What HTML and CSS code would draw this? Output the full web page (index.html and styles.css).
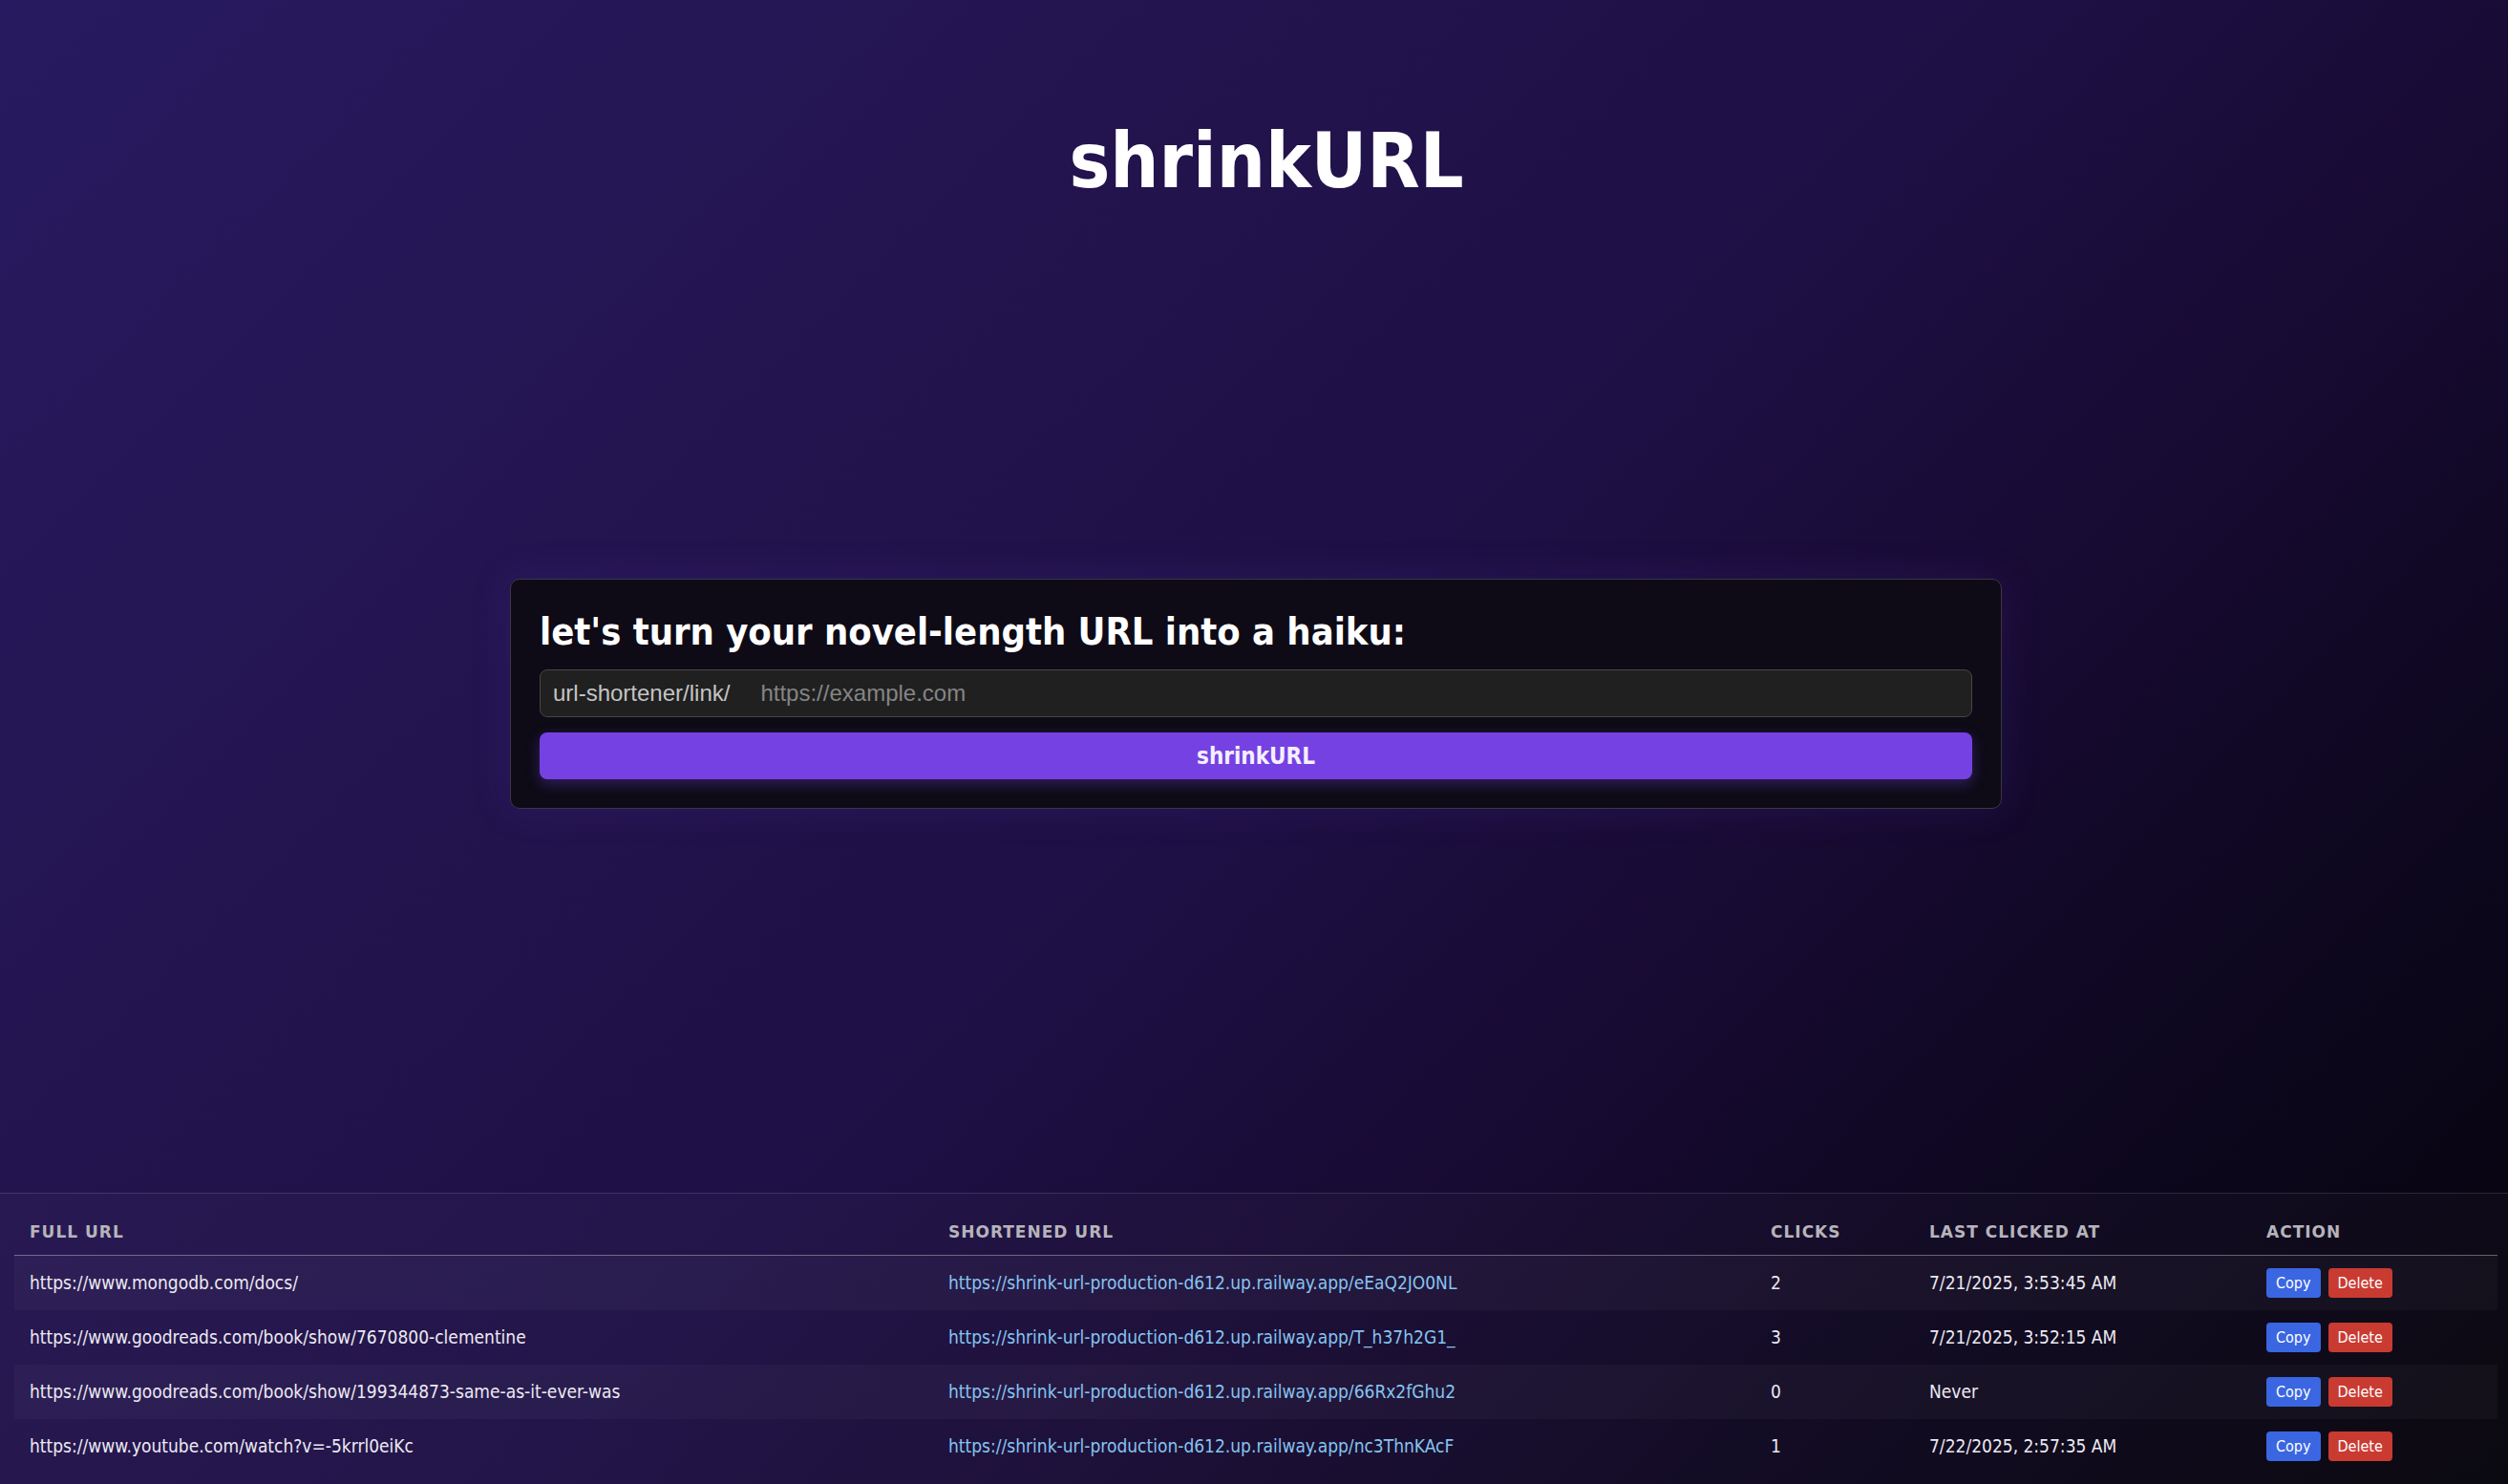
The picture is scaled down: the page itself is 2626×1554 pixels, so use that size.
FILE: index.html
```html
<!DOCTYPE html>
<html lang="en">
<head>
<meta charset="utf-8">
<title>shrinkURL</title>
<link rel="stylesheet" href="styles.css">
</head>
<body>
<main class="page">
  <header class="hero">
    <h1 class="brand">shrinkURL</h1>
  </header>

  <section class="card">
    <h2 class="card-title">let's turn your novel-length URL into a haiku:</h2>
    <form class="shrink-form">
      <label class="field">
        <span class="prefix">url-shortener/link/</span>
        <input class="url-input" type="text" placeholder="https://example.com">
      </label>
      <button class="submit" type="button">shrinkURL</button>
    </form>
  </section>

  <section class="links">
    <table class="link-table">
      <colgroup>
        <col class="c-full">
        <col class="c-short">
        <col class="c-clicks">
        <col class="c-last">
        <col class="c-action">
      </colgroup>
      <thead>
        <tr>
          <th>Full URL</th>
          <th>Shortened URL</th>
          <th>Clicks</th>
          <th>Last Clicked At</th>
          <th>Action</th>
        </tr>
      </thead>
      <tbody>
        <tr>
          <td>https://www.mongodb.com/docs/</td>
          <td><a class="short" href="#">https://shrink-url-production-d612.up.railway.app/eEaQ2JO0NL</a></td>
          <td>2</td>
          <td>7/21/2025, 3:53:45 AM</td>
          <td><div class="actions"><button class="btn btn-copy" type="button">Copy</button><button class="btn btn-delete" type="button">Delete</button></div></td>
        </tr>
        <tr>
          <td>https://www.goodreads.com/book/show/7670800-clementine</td>
          <td><a class="short" href="#">https://shrink-url-production-d612.up.railway.app/T_h37h2G1_</a></td>
          <td>3</td>
          <td>7/21/2025, 3:52:15 AM</td>
          <td><div class="actions"><button class="btn btn-copy" type="button">Copy</button><button class="btn btn-delete" type="button">Delete</button></div></td>
        </tr>
        <tr>
          <td>https://www.goodreads.com/book/show/199344873-same-as-it-ever-was</td>
          <td><a class="short" href="#">https://shrink-url-production-d612.up.railway.app/66Rx2fGhu2</a></td>
          <td>0</td>
          <td>Never</td>
          <td><div class="actions"><button class="btn btn-copy" type="button">Copy</button><button class="btn btn-delete" type="button">Delete</button></div></td>
        </tr>
        <tr>
          <td>https://www.youtube.com/watch?v=-5krrl0eiKc</td>
          <td><a class="short" href="#">https://shrink-url-production-d612.up.railway.app/nc3ThnKAcF</a></td>
          <td>1</td>
          <td>7/22/2025, 2:57:35 AM</td>
          <td><div class="actions"><button class="btn btn-copy" type="button">Copy</button><button class="btn btn-delete" type="button">Delete</button></div></td>
        </tr>
      </tbody>
    </table>
  </section>
</main>
</body>
</html>
```

FILE: styles.css
```css
* {
  box-sizing: border-box;
}

html, body {
  margin: 0;
  padding: 0;
}

body {
  min-height: 100vh;
  background: linear-gradient(135deg, #281a60 0%, #23144f 30%, #1e1045 50%, #180b34 65%, #0e0720 80%, #06040b 100%);
  color: #ffffff;
  font-family: "DejaVu Sans Condensed", "DejaVu Sans", sans-serif;
  font-stretch: condensed;
}

.page {
  display: flex;
  flex-direction: column;
  align-items: stretch;
}

.hero {
  display: flex;
  justify-content: center;
  padding-top: 121px;
}

.brand {
  margin: 0;
  font-size: 80px;
  line-height: 96px;
  font-weight: 700;
  color: #ffffff;
  padding-left: 26px;
}

.card {
  align-self: center;
  width: 1562px;
  margin-top: 389px;
  margin-left: 4px;
  padding: 30px;
  background: #0e0b17;
  border: 1px solid #3a3844;
  border-radius: 10px;
  box-shadow: 0 0 40px rgba(90, 50, 180, 0.18);
}

.card-title {
  margin: 0;
  font-size: 39.5px;
  line-height: 48px;
  font-weight: 700;
  color: #ffffff;
}

.shrink-form {
  display: flex;
  flex-direction: column;
  gap: 16px;
  margin-top: 16px;
}

.field {
  display: flex;
  align-items: center;
  height: 50px;
  background: #202020;
  border: 1px solid #464646;
  border-radius: 8px;
  font-family: "Liberation Sans", Arial, sans-serif;
  font-stretch: normal;
  font-size: 24px;
}

.prefix {
  padding-left: 13px;
  color: #c4c4c4;
  white-space: nowrap;
}

.url-input {
  flex: 1;
  min-width: 0;
  height: 100%;
  padding: 0 14px 0 32px;
  background: transparent;
  border: none;
  outline: none;
  color: #e6e6e6;
  font-family: inherit;
  font-size: 24px;
}

.url-input::placeholder {
  color: #858585;
}

.submit {
  height: 49px;
  border: none;
  border-radius: 8px;
  background: #7641e2;
  color: #f4f0ff;
  font-family: "DejaVu Sans Condensed", "DejaVu Sans", sans-serif;
  font-stretch: condensed;
  font-size: 24px;
  font-weight: 700;
  box-shadow: 0 5px 14px rgba(118, 65, 226, 0.35);
}

.links {
  margin-top: 402px;
  padding: 15px 15px 13px;
  background: rgba(255, 255, 255, 0.025);
  border-top: 1px solid rgba(255, 255, 255, 0.12);
}

.link-table {
  width: 100%;
  table-layout: fixed;
  border-collapse: collapse;
}

.c-full { width: 962px; }
.c-short { width: 861px; }
.c-clicks { width: 166px; }
.c-last { width: 353px; }
.c-action { width: 258px; }

.link-table th {
  padding: 15px 16px 13px;
  text-align: left;
  font-family: "DejaVu Sans", sans-serif;
  font-stretch: normal;
  font-size: 17px;
  line-height: 21px;
  font-weight: 700;
  letter-spacing: 1px;
  text-transform: uppercase;
  color: #b6b4bc;
  border-bottom: 1px solid rgba(255, 255, 255, 0.2);
}

.link-table tbody tr {
  height: 57px;
}

.link-table tbody tr:nth-child(odd) {
  background: rgba(255, 255, 255, 0.03);
}

.link-table td {
  padding: 0 16px;
  vertical-align: middle;
  font-size: 19px;
  line-height: 23px;
  color: #ece9f2;
  white-space: nowrap;
  overflow: hidden;
}

.short {
  color: #86c4f0;
  text-decoration: none;
}

.actions {
  display: flex;
  gap: 8px;
}

.btn {
  height: 31px;
  padding: 0 10px;
  border: none;
  border-radius: 4px;
  color: #ffffff;
  font-family: "DejaVu Sans Condensed", "DejaVu Sans", sans-serif;
  font-stretch: condensed;
  font-size: 16px;
  line-height: 31px;
}

.btn-copy {
  background: #3a66e2;
}

.btn-delete {
  background: #c93a31;
}
```
